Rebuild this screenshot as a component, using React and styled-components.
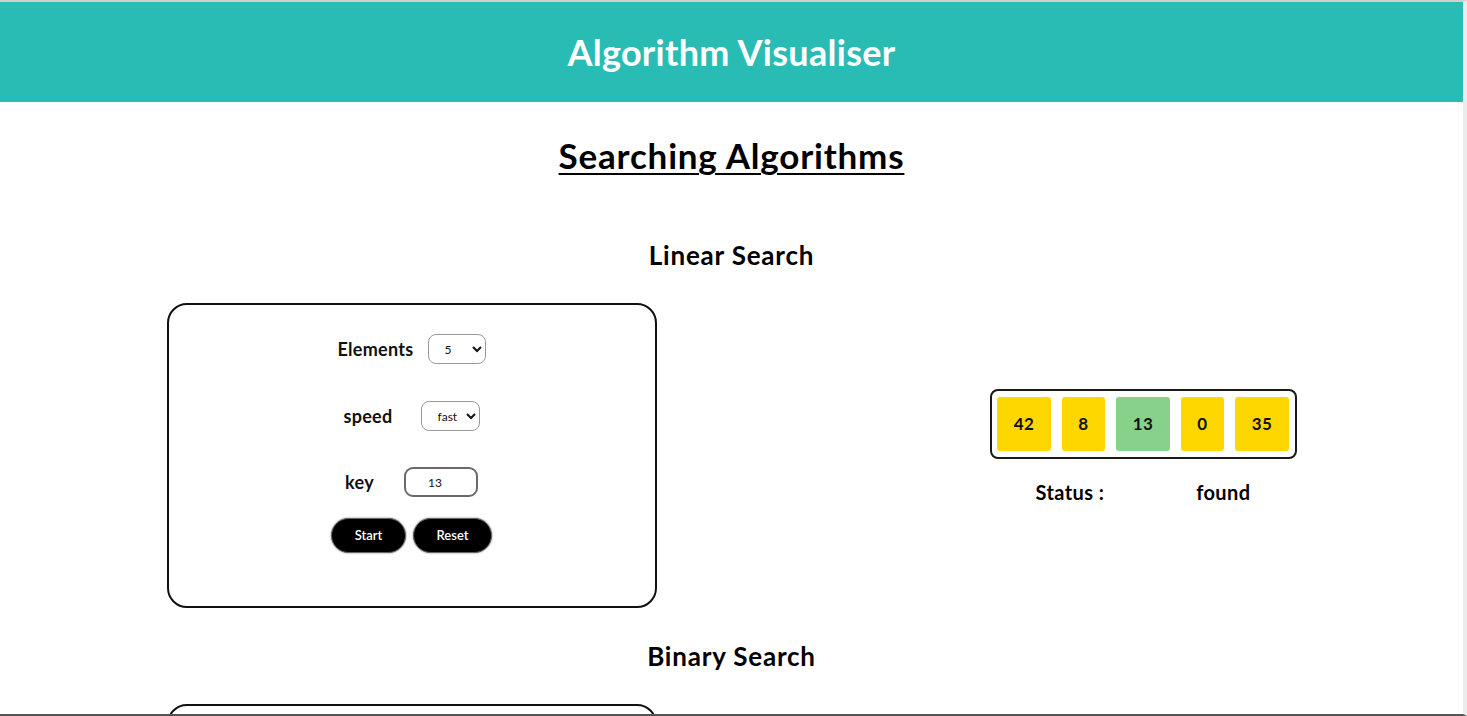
import React from 'react';
import styled, { createGlobalStyle } from 'styled-components';

const GlobalStyle = createGlobalStyle`
  html, body {
    margin: 0;
    padding: 0;
    background: #fff;
    overflow: hidden;
  }
  body {
    font-family: Lato, 'Liberation Sans', sans-serif;
    color: #000;
  }
`;

const Page = styled.div`
  border-top: 2px solid #cfcfcf;
  border-right: 4px solid #ececec;
  border-bottom: 2px solid #555;
  height: 716px;
  box-sizing: border-box;
  overflow: hidden;
`;

const Header = styled.header`
  height: 100px;
  background: #29bcb4;
  display: flex;
  align-items: center;
  justify-content: center;

  h1 {
    margin: 0;
    color: #fff;
    font-size: 36px;
    font-weight: 700;
    letter-spacing: 0.3px;
  }
`;

const PageTitle = styled.h2`
  margin: 33px 0 0;
  text-align: center;
  font-size: 35px;
  line-height: 40px;
  font-weight: 700;
  letter-spacing: 0.8px;
  text-decoration: underline;
  text-underline-offset: 4px;
  text-decoration-thickness: 2px;
`;

const SectionTitle = styled.h3`
  margin: ${(p) => p.$top}px 0 0;
  text-align: center;
  font-size: 26px;
  line-height: 30px;
  font-weight: 700;
  letter-spacing: 0.8px;
`;

const Section = styled.section`
  margin-top: 33px;
  display: flex;
  justify-content: space-around;
  align-items: center;
`;

const Card = styled.div`
  width: 490px;
  box-sizing: border-box;
  border: 2px solid #111;
  border-radius: 20px;
  padding: 29px 0 54px;
  display: flex;
  flex-direction: column;
  align-items: center;
`;

const Row = styled.div`
  display: flex;
  align-items: center;
  justify-content: center;
  gap: ${(p) => p.$gap}px;
  height: ${(p) => p.$h || 30}px;
  margin-top: ${(p) => p.$top || 0}px;
`;

const Label = styled.label`
  font-size: 18px;
  font-weight: 700;
  letter-spacing: 0.3px;
  color: #111;
`;

const Select = styled.select`
  width: ${(p) => p.$w}px;
  height: 30px;
  box-sizing: border-box;
  border: 1px solid #9a9a9a;
  border-radius: 8px;
  background: #fff;
  font-family: Lato, 'Liberation Sans', sans-serif;
  font-size: 12px;
  color: #111;
  padding: 0 4px 0 12px;
`;

const KeyInput = styled.input`
  width: 74px;
  height: 30px;
  box-sizing: border-box;
  border: 2px solid #6a6a6a;
  border-radius: 9px;
  padding: 0 0 0 22px;
  font-family: Lato, 'Liberation Sans', sans-serif;
  font-size: 12px;
  color: #111;
  outline: none;
`;

const Button = styled.button`
  width: ${(p) => p.$w}px;
  height: 35px;
  border: 1px solid #666;
  border-radius: 18px;
  background: #000;
  color: #fff;
  font-family: Lato, 'Liberation Sans', sans-serif;
  font-size: 13px;
  font-weight: 600;
  box-shadow: 0 0 2px #777;
  cursor: pointer;
`;

const Visual = styled.div`
  width: 307px;
  padding-bottom: 16px;
`;

const ArrayBox = styled.div`
  box-sizing: border-box;
  height: 70px;
  border: 2px solid #1a1a1a;
  border-radius: 8px;
  padding: 6px;
  display: flex;
  gap: 11px;
  justify-content: center;
`;

const Cell = styled.div`
  height: 54px;
  min-width: ${(p) => (p.$wide ? 54 : 43)}px;
  box-sizing: border-box;
  border-radius: 3px;
  background: ${(p) => (p.$found ? '#88d18a' : '#ffd700')};
  display: flex;
  align-items: center;
  justify-content: center;
  font-size: 17px;
  font-weight: 700;
  letter-spacing: 0.5px;
  color: #111;
`;

const StatusRow = styled.div`
  margin-top: 18px;
  height: 30px;
  display: flex;
  justify-content: space-around;
  align-items: center;
  font-size: 20px;
  font-weight: 700;
  letter-spacing: 0.4px;
`;

const values = [42, 8, 13, 0, 35];

function SearchPanel({ status, found }) {
  return (
    <Section>
      <Card>
        <Row $gap={14}>
          <Label>Elements</Label>
          <Select $w={58} defaultValue="5">
            <option>5</option>
            <option>10</option>
            <option>15</option>
          </Select>
        </Row>
        <Row $gap={28} $top={37}>
          <Label>speed</Label>
          <Select $w={59} defaultValue="fast">
            <option>slow</option>
            <option>medium</option>
            <option>fast</option>
          </Select>
        </Row>
        <Row $gap={30} $top={36}>
          <Label>key</Label>
          <KeyInput defaultValue="13" />
        </Row>
        <Row $gap={7} $top={21} $h={34}>
          <Button $w={75}>Start</Button>
          <Button $w={79}>Reset</Button>
        </Row>
      </Card>
      <Visual>
        <ArrayBox>
          {values.map((v) => (
            <Cell key={v} $wide={v > 9} $found={v === found}>
              {v}
            </Cell>
          ))}
        </ArrayBox>
        <StatusRow>
          <span>Status :</span>
          <span>{status}</span>
        </StatusRow>
      </Visual>
    </Section>
  );
}

export default function App() {
  return (
    <Page>
      <GlobalStyle />
      <Header>
        <h1>Algorithm Visualiser</h1>
      </Header>
      <PageTitle>Searching Algorithms</PageTitle>
      <SectionTitle $top={65}>Linear Search</SectionTitle>
      <SearchPanel status="found" found={13} />
      <SectionTitle $top={33}>Binary Search</SectionTitle>
      <SearchPanel status="" found={-1} />
    </Page>
  );
}
